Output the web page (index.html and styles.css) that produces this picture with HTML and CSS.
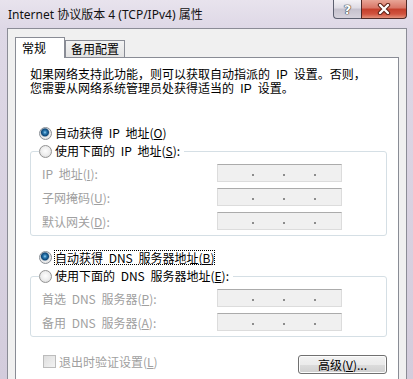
FILE: index.html
```html
<!DOCTYPE html>
<html lang="zh-CN">
<head>
    <meta charset="UTF-8">
    <title>Internet 协议版本 4 (TCP/IPv4) 属性</title>
    <link rel="stylesheet" href="styles.css">
</head>
<body>
    <div class="window">
        <div class="titlebar">
            <span class="title">Internet 协议版本 4 (TCP/IPv4) 属性</span>
            <div class="caption-btns">
                <div class="cbtn help">?</div>
                <div class="cbtn close">
                    <svg width="16" height="12" viewBox="0 0 16 12">
                        <path d="M4 2 L12 10 M12 2 L4 10" stroke="#5e2216" stroke-width="4.4" stroke-linecap="round"/>
                        <path d="M4 2 L12 10 M12 2 L4 10" stroke="#fff" stroke-width="2.4" stroke-linecap="round"/>
                    </svg>
                </div>
            </div>
        </div>
        <div class="client">
            <div class="tabs">
                <div class="tab active">常规</div>
                <div class="tab">备用配置</div>
            </div>
            <div class="panel">
                <p class="intro">如果网络支持此功能，则可以获取自动指派的 IP 设置。否则，</p>
                <p class="intro next">您需要从网络系统管理员处获得适当的 IP 设置。</p>

                <div class="option"><span class="radio on"></span><span>自动获得 IP 地址(<u>O</u>)</span></div>
                <fieldset class="group">
                    <legend class="option"><span class="radio"></span><span>使用下面的 IP 地址(<u>S</u>):</span></legend>
                    <div class="row"><span class="lbl">IP 地址(<u>I</u>):</span><span class="ipbox"><i></i><i></i><i></i></span></div>
                    <div class="row"><span class="lbl">子网掩码(<u>U</u>):</span><span class="ipbox"><i></i><i></i><i></i></span></div>
                    <div class="row"><span class="lbl">默认网关(<u>D</u>):</span><span class="ipbox"><i></i><i></i><i></i></span></div>
                </fieldset>

                <div class="option dns"><span class="radio on"></span><span class="focus">自动获得 DNS 服务器地址(<u>B</u>)</span></div>
                <fieldset class="group group2">
                    <legend class="option"><span class="radio"></span><span>使用下面的 DNS 服务器地址(<u>E</u>):</span></legend>
                    <div class="row"><span class="lbl">首选 DNS 服务器(<u>P</u>):</span><span class="ipbox"><i></i><i></i><i></i></span></div>
                    <div class="row"><span class="lbl">备用 DNS 服务器(<u>A</u>):</span><span class="ipbox"><i></i><i></i><i></i></span></div>
                </fieldset>

                <div class="bottom">
                    <div class="check"><span class="box"></span><span>退出时验证设置(<u>L</u>)</span></div>
                    <div class="button">高级(<u>V</u>)...</div>
                </div>
            </div>
        </div>
    </div>
</body>
</html>
```

FILE: styles.css
```css
*{
    padding: 0;
    margin: 0;
    box-sizing: border-box;
}
body{
    width: 413px;
    height: 379px;
    overflow: hidden;
    font-family: "Noto Sans CJK SC", "Noto Sans", sans-serif;
    font-size: 12px;
    color: #000;
    background: linear-gradient(180deg, #e8e3ed 0, #ded8e6 28px, #d3ccdc 100%);
}
u{
    text-decoration: underline;
    text-underline-offset: 1px;
}

/* title bar */
.titlebar{
    display: flex;
    height: 28px;
    padding: 0 6px 0 8px;
}
.titlebar .title{
    margin-top: 6px;
    line-height: 18px;
    font-family: "Noto Sans", "Noto Sans CJK SC", sans-serif;
    font-size: 12px;
    color: #111;
}
.caption-btns{
    display: flex;
    margin-left: auto;
    height: 19px;
}
.cbtn{
    height: 19px;
    display: flex;
    align-items: center;
    justify-content: center;
}
.help{
    width: 28px;
    border: 1px solid #5d6070;
    border-top: none;
    border-right: none;
    border-radius: 0 0 0 4px;
    background: linear-gradient(180deg, #f4f2f6 0, #dedbe4 45%, #c5c1cd 50%, #d6d2dc 100%);
    color: #fff;
    font-family: "DejaVu Sans", sans-serif;
    font-weight: bold;
    font-size: 13px;
    text-shadow: 0 0 1px #333, 0 0 1px #333, 0 0 1px #333;
}
.close{
    width: 46px;
    border: 1px solid #4f2a26;
    border-top: none;
    border-radius: 0 0 4px 0;
    background: linear-gradient(180deg, #e8a596 0, #d87565 45%, #c43f2b 50%, #d0533e 78%, #e4927c 100%);
}

/* client area */
.client{
    margin-left: 7px;
    width: 400px;
    height: 351px;
    border: 1px solid #8b8c96;
    border-bottom: none;
    background: #f0f0f0;
}
.tabs{
    display: flex;
    align-items: flex-end;
    height: 20px;
    margin-top: 8px;
    padding-left: 7px;
}
.tab{
    height: 17px;
    padding: 0 5px;
    border: 1px solid #898c95;
    border-bottom: none;
    line-height: 16px;
    background: linear-gradient(180deg, #f3f3f3, #e3e3e3);
}
.tab.active{
    position: relative;
    z-index: 1;
    width: 50px;
    height: 21px;
    margin-bottom: -1px;
    padding-left: 6px;
    line-height: 20px;
    background: #fff;
}
.panel{
    margin-left: 7px;
    width: 384px;
    height: 330px;
    border: 1px solid #898c95;
    border-bottom: none;
    background: #fff;
    word-spacing: 3px;
}
.intro{
    margin: 10px 0 0 14px;
    height: 14px;
    line-height: 14px;
    font-family: "Liberation Sans", "Noto Sans CJK SC", sans-serif;
    white-space: nowrap;
}
.intro.next{
    margin-top: 0;
}

/* radio options */
.option{
    display: flex;
    align-items: center;
    gap: 3px;
    height: 16px;
    line-height: 16px;
    white-space: nowrap;
}
.panel > .option{
    margin-top: 29px;
    padding-left: 23px;
}
.panel > .option.dns{
    margin-top: 13px;
}
.radio{
    flex: none;
    width: 13px;
    height: 13px;
    border-radius: 50%;
    border: 1px solid #939393;
    background: radial-gradient(circle at 50% 45%, #fdfdfd 0, #ececec 55%, #cfcfcf 100%);
}
.radio.on{
    border-color: #8a8f96;
    background: radial-gradient(circle at 45% 40%, #9fd3f3 0, #2f7fb6 1.5px, #0d4677 3.5px, #c7cdd3 4.5px, #eeeeee 5px, #d2d2d2 100%);
}
.focus{
    outline: 1px dotted #000;
    outline-offset: -1px;
    padding: 0 1px;
    line-height: 15px;
    margin-left: -1px;
}

/* group boxes */
.group{
    margin: 2px 11px 0 14px;
    padding: 0 0 5px 8px;
    border: 1px solid #d5dfe5;
    border-radius: 3px;
}
.group legend{
    padding-right: 4px;
}
.group2{
    margin-top: 3px;
}
.row{
    display: grid;
    grid-template-columns: 175px 125px;
    align-items: center;
    height: 18px;
    margin-top: 6px;
    padding-left: 3px;
    color: #a0a0a0;
    white-space: nowrap;
}
.group legend + .row{
    margin-top: 5px;
}
.ipbox{
    display: flex;
    align-items: center;
    gap: 29px;
    height: 18px;
    padding: 4px 0 0 34px;
    border: 1px solid #dcdcdc;
    border-top-color: #ababab;
    background: #f0f0f0;
}
.ipbox i{
    width: 2px;
    height: 2px;
    background: #8c8c8c;
}

/* bottom row */
.bottom{
    display: flex;
    justify-content: space-between;
    align-items: flex-start;
    margin: 17px 11px 0 27px;
}
.check{
    display: flex;
    align-items: center;
    gap: 3px;
    height: 14px;
    color: #a0a0a0;
}
.check .box{
    width: 13px;
    height: 13px;
    border: 1px solid #bcbcbc;
    background: linear-gradient(135deg, #dedede, #f3f3f3);
}
.button{
    width: 89px;
    height: 19px;
    margin-top: 1px;
    border: 1px solid #707070;
    border-radius: 3px;
    line-height: 17px;
    text-align: center;
    word-spacing: 0;
    background: linear-gradient(180deg, #f2f2f2 0, #ebebeb 50%, #dddddd 50%, #cfcfcf 100%);
    box-shadow: inset 0 0 0 1px #fcfcfc;
}
```
